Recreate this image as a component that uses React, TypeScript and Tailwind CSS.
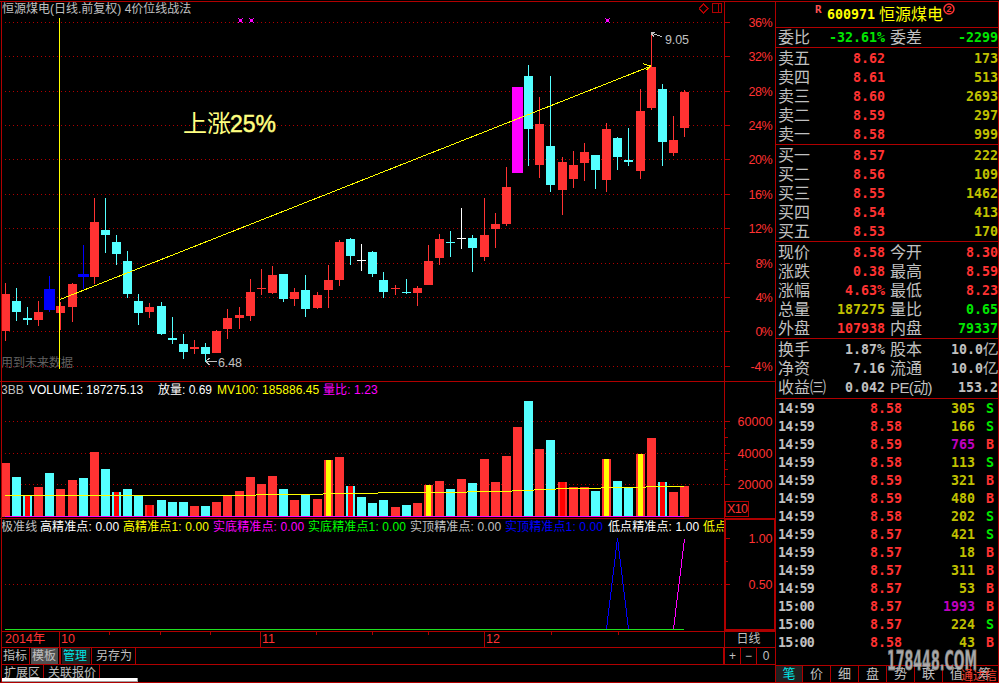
import React from "react";

type Kind = "r" | "c" | "b" | "w" | "m";
type Bar = [x: number, high: number, low: number, top: number, bottom: number, kind: Kind, vol: number, volKind: "r" | "c", inner?: "y" | "r"];

const BARS: Bar[] = [
  [5, 283, 341, 294, 331, "r", 463, "r"],
  [16, 288, 321, 301, 312, "c", 477, "c"],
  [27, 307, 325, 318, 320, "c", 496, "c", "r"],
  [38, 301, 326, 312, 320, "r", 487, "r"],
  [49, 276, 312, 289, 310, "b", 473, "c"],
  [60, 302, 330, 306, 313, "r", 489, "r"],
  [72, 283, 322, 284, 307, "r", 480, "r"],
  [83, 245, 289, 274, 277, "b", 478, "c"],
  [94, 198, 284, 222, 277, "r", 452, "r"],
  [105, 198, 253, 230, 235, "c", 469, "c"],
  [116, 235, 265, 242, 254, "c", 492, "c", "r"],
  [127, 251, 298, 261, 294, "c", 489, "c"],
  [138, 294, 325, 301, 313, "c", 496, "c"],
  [149, 303, 318, 307, 312, "r", 505, "r", "r"],
  [161, 302, 335, 306, 334, "c", 500, "c"],
  [172, 317, 344, 338, 340, "c", 502, "c"],
  [183, 334, 359, 344, 352, "c", 502, "c"],
  [194, 340, 354, 347, 349, "r", 506, "r"],
  [205, 343, 362, 347, 354, "c", 506, "c"],
  [216, 330, 353, 331, 353, "r", 502, "r"],
  [227, 309, 339, 318, 329, "r", 496, "r"],
  [239, 307, 329, 315, 318, "r", 491, "r"],
  [250, 279, 321, 292, 316, "r", 477, "r"],
  [261, 269, 295, 288, 289, "r", 484, "r"],
  [272, 266, 294, 275, 293, "r", 476, "r"],
  [283, 274, 302, 274, 299, "c", 489, "c"],
  [294, 288, 306, 292, 299, "r", 500, "r"],
  [305, 275, 317, 290, 309, "c", 495, "c"],
  [317, 292, 309, 295, 308, "r", 499, "r"],
  [328, 265, 308, 280, 290, "r", 460, "r", "y"],
  [339, 240, 286, 242, 280, "r", 457, "r"],
  [350, 238, 265, 239, 256, "c", 486, "c", "r"],
  [361, 244, 271, 260, 261, "w", 497, "c"],
  [372, 251, 277, 252, 274, "c", 503, "c"],
  [383, 272, 298, 280, 292, "c", 500, "c"],
  [395, 285, 295, 288, 289, "r", 507, "r"],
  [406, 279, 294, 292, 293, "c", 505, "c"],
  [417, 286, 306, 288, 293, "r", 503, "r"],
  [428, 245, 285, 261, 285, "r", 485, "r", "y"],
  [439, 234, 265, 239, 258, "r", 481, "r"],
  [450, 231, 257, 242, 243, "c", 489, "c"],
  [461, 208, 249, 238, 239, "w", 479, "r"],
  [472, 235, 272, 238, 248, "c", 483, "c"],
  [484, 198, 261, 235, 257, "r", 459, "r"],
  [495, 213, 248, 224, 229, "r", 482, "r"],
  [506, 167, 226, 187, 224, "r", 456, "r"],
  [517, 87, 173, 87, 173, "m", 427, "r"],
  [528, 65, 166, 76, 129, "c", 401, "c"],
  [539, 97, 178, 124, 165, "r", 449, "r"],
  [550, 76, 192, 146, 185, "c", 440, "c"],
  [562, 157, 215, 162, 190, "r", 482, "r", "r"],
  [573, 151, 188, 165, 179, "r", 487, "r"],
  [584, 143, 181, 152, 163, "r", 487, "r"],
  [595, 155, 189, 155, 170, "c", 491, "c"],
  [606, 123, 192, 129, 180, "r", 459, "r", "y"],
  [617, 137, 170, 138, 157, "c", 481, "c"],
  [628, 128, 166, 160, 162, "c", 487, "c"],
  [640, 89, 179, 111, 171, "r", 454, "r", "y"],
  [651, 33, 110, 67, 108, "r", 438, "r"],
  [662, 84, 166, 89, 142, "c", 482, "c", "r"],
  [673, 116, 156, 140, 153, "r", 492, "r"],
  [684, 90, 137, 92, 128, "r", 486, "r"],
];

const FILL: Record<Kind, string> = { r: "#ff3232", c: "#54ffff", b: "#0000ff", w: "#ffffff", m: "#ff00ff" };
const LINE = "#b00000";

function Grid({ ys }: { ys: number[] }) {
  return (
    <g stroke={LINE} strokeDasharray="1 3">
      {ys.map((y) => (
        <line key={y} x1={5} x2={723} y1={y + 0.5} y2={y + 0.5} />
      ))}
    </g>
  );
}

function Ticks({ ys, len }: { ys: number[]; len: number }) {
  return (
    <g fill={LINE}>
      {ys.map((y) => (
        <rect key={y} x={725} y={y} width={len} height={1} />
      ))}
    </g>
  );
}

function AxisText({ y, width, children }: { y: number; width: number; children: string }) {
  return (
    <text x={772.5 - width} y={y + 5} textLength={width} fontSize="12.5" fill="#ff3232">
      {children}
    </text>
  );
}

function Star({ x, s }: { x: number; s: number }) {
  return (
    <g fill="#ff00ff">
      <rect x={x - 1} y={19} width={3} height={3} />
      <path d={`M${x - s} 18h1v1h-1z M${x + s} 18h1v1h-1z M${x - s} 22h1v1h-1z M${x + s} 22h1v1h-1z`} />
    </g>
  );
}

const PRICE_AXIS: [number, string, number][] = [
  [22, "36%", 24], [56, "32%", 24], [91, "28%", 24], [125, "24%", 24], [159, "20%", 24], [194, "16%", 24],
  [228, "12%", 24], [263, "8%", 17], [297, "4%", 17], [331, "0%", 17], [366, "-4%", 22],
];

function PriceChart() {
  return (
    <svg className="block overflow-visible" width="775" height="363" viewBox="0 18 775 363" shapeRendering="crispEdges">
      <Grid ys={PRICE_AXIS.map((a) => a[0])} />
      <rect x={724} y={18} width={1} height={363} fill={LINE} />
      <Ticks ys={PRICE_AXIS.map((a) => a[0])} len={5} />
      {PRICE_AXIS.map(([y, label, w]) => (
        <AxisText key={label} y={y} width={w}>{label}</AxisText>
      ))}
      <Star x={240} s={2} />
      <Star x={251} s={2} />
      <Star x={607} s={2} />
      <text x={1} y={367} fontSize="12" fill="#606060">用到未来数据</text>
      {BARS.map(([x, hi, lo, top, bot, k]) => {
        const half = k === "b" || k === "m" ? 5 : x === 5 ? 3 : 4;
        const w = k === "b" || k === "m" ? 11 : x === 5 ? 8 : 9;
        return (
          <g key={x} fill={FILL[k]}>
            <rect x={x} y={hi} width={1} height={lo - hi} />
            <rect x={x - half} y={top} width={w} height={bot - top} />
          </g>
        );
      })}
      <rect x={59} y={18} width={1} height={351} fill="#ffff00" />
      <path d="M60 299.5L650 66.5M643 63.5L651 66.5M651 65.5L646.5 70" stroke="#ffff00" fill="none" />
      <path d="M651.5 35V32.5H655M652 33.5L662 36.5M652 34L654 37" stroke="#c0c0c0" fill="none" />
      <text x={665} y={44} fontSize="12.5" textLength="24" fill="#c0c0c0">9.05</text>
      <path d="M206 361.5H217M206 361L210 358M206 362L210 365" stroke="#c0c0c0" fill="none" />
      <text x={218} y={367} fontSize="12.5" textLength="24" fill="#c0c0c0">6.48</text>
      <text x={183} y={132} fontSize="24" fill="#ffff80">上涨</text>
      <text x={230} y={132} fontSize="24" textLength="46" lengthAdjust="spacingAndGlyphs" fill="#ffff80" stroke="#ffff80" strokeWidth="0.5">25%</text>
    </svg>
  );
}

function VolumeChart() {
  return (
    <svg className="block" width="775" height="119" viewBox="0 399 775 119" shapeRendering="crispEdges">
      <Grid ys={[421, 453, 484]} />
      <rect x={724} y={399} width={1} height={119} fill={LINE} />
      <Ticks ys={[421, 453, 484]} len={5} />
      <Ticks ys={[437, 469]} len={3} />
      <Ticks ys={[428, 445, 460, 476]} len={1} />
      <AxisText y={421} width={35}>60000</AxisText>
      <AxisText y={453} width={35}>40000</AxisText>
      <AxisText y={484} width={35}>20000</AxisText>
      <rect x={725.5} y={501.5} width={23} height={15} fill="none" stroke={LINE} />
      <text x={727} y={513} fontSize="12.5" textLength="21" fill="#ff3232">X10</text>
      {BARS.map(([x, , , , , , top, k, inner]) => (
        <g key={x}>
          <rect x={x === 5 ? 2 : x - 4} y={top} width={x === 5 ? 8 : 9} height={517 - top} fill={FILL[k]} />
          {inner && <rect x={x - 2} y={top} width={5} height={517 - top} fill={inner === "y" ? "#ffff00" : "#ff0000"} />}
        </g>
      ))}
      <path
        d="M5 495.5H256M256 494.5H323M323 493.5H378M378 492.5H467M467 491.5H512M512 490.5H534M534 489.5H556M556 488.5H601M601 487.5H646M646 486.5H684"
        stroke="#ffff00"
      />
      <rect x={5} y={516} width={679} height={1} fill="#ff00ff" />
    </svg>
  );
}

function IndicatorChart() {
  return (
    <svg className="block overflow-visible" width="775" height="95" viewBox="0 536 775 95" shapeRendering="crispEdges">
      <Grid ys={[584]} />
      <path d="M725 519V630H775" stroke={LINE} strokeWidth="2" fill="none" />
      <rect x={774} y={519} width={1} height={112} fill={LINE} />
      <Ticks ys={[538, 584]} len={5} />
      <Ticks ys={[561]} len={3} />
      <AxisText y={538} width={24}>1.00</AxisText>
      <AxisText y={584} width={24}>0.50</AxisText>
      <rect x={5} y={629} width={679} height={1} fill="#20e020" />
      <path d="M606.5 629L617.5 538L628.5 629" stroke="#0000ff" fill="none" />
      <path d="M673.5 629L684.5 539" stroke="#ff00ff" fill="none" />
    </svg>
  );
}

function Head({ children, side, short }: { children: React.ReactNode; side?: React.ReactNode; short?: boolean }) {
  return (
    <div className={`flex w-full ${short ? "h-[16px] leading-[15px]" : "h-[17px] leading-[17px]"}`}>
      <div className="flex w-[725px] overflow-hidden border-r border-[#b00000] pl-px text-[12px] whitespace-pre">{children}</div>
      {side}
    </div>
  );
}

function MainPanels() {
  return (
    <>
      <Head short>
        <span className="w-[698px] pl-px text-[#c0c0c0]">恒源煤电(日线.前复权) 4价位线战法</span>
        <svg className="h-[14px] w-[25px] shrink-0" viewBox="699 2 25 14" fill="none" stroke={LINE} shapeRendering="crispEdges">
          <path d="M703.5 4L708 8.5L703.5 13L699 8.5Z" />
          <path d="M712.5 3.5H721.5V12.5H712.5ZM718.5 3V13" />
        </svg>
      </Head>
      <PriceChart />
      <div className="h-px bg-[#b00000]" />
      <Head>
        <span className="w-[28px] text-[#c0c0c0]">3BB</span>
        <span className="w-[129px] text-white">VOLUME: 187275.13</span>
        <span className="w-[59px] text-white">放量: 0.69</span>
        <span className="w-[106px] tracking-[0.05px] text-[#ffff00]">MV100: 185886.45</span>
        <span className="tracking-[0.1px] text-[#ff00ff]">量比: 1.23</span>
      </Head>
      <VolumeChart />
      <div className="h-px bg-[#b00000]" />
      <Head side={<div className="h-full flex-1 border-t border-[#b00000]" />}>
        <div className="flex tracking-[0.12px]">
          <span className="w-[39px] shrink-0 text-[#c0c0c0]">极准线</span>
          <span className="w-[83px] shrink-0 text-white">高精准点: 0.00</span>
          <span className="w-[90px] shrink-0 text-[#ffff00]">高精准点1: 0.00</span>
          <span className="w-[95px] shrink-0 text-[#ff00ff]">实底精准点: 0.00</span>
          <span className="w-[102px] shrink-0 text-[#00ff00]">实底精准点1: 0.00</span>
          <span className="w-[95px] shrink-0 text-[#c0c0c0]">实顶精准点: 0.00</span>
          <span className="w-[103px] shrink-0 text-[#0000ff]">实顶精准点1: 0.00</span>
          <span className="w-[95px] shrink-0 text-white">低点精准点: 1.00</span>
          <span className="shrink-0 text-[#ffff00]">低点</span>
        </div>
      </Head>
      <IndicatorChart />
    </>
  );
}

function TimeAxis() {
  return (
    <div className="flex h-[17px] w-full border-y border-[#b00000] text-[12.5px] leading-[15px] text-[#ff3232]">
      <span className="w-[57px] pl-[3px]">2014年</span>
      <span className="w-[201px] border-l border-[#b00000] pl-px">10</span>
      <span className="w-[224px] border-l border-[#b00000] pl-px">11</span>
      <span className="w-[240px] border-l border-[#b00000] pl-px">12</span>
      <span className="flex-1 border-l border-[#b00000] pr-[3px] text-center text-[12px] text-[#c0c0c0]">日线</span>
    </div>
  );
}

function AxisMarks() {
  return (
    <svg className="absolute top-[631px] left-0" width="724" height="4" shapeRendering="crispEdges" fill={LINE}>
      {[109, 160, 210, 316, 372, 428, 551, 618].map((x) => (
        <rect key={x} x={x} y={0} width={1} height={4} />
      ))}
    </svg>
  );
}

function Toolbars() {
  return (
    <>
      <div className="flex h-[17px] w-full border-b border-[#b00000] text-[12px] leading-[17px] text-[#c0c0c0]">
        <span className="w-[28px] border-r border-[#b00000] pl-px">指标</span>
        <span className="w-[31px] border-r-2 border-[#b00000] px-px"><span className="block h-[16px] w-[27px] bg-[#505050] pl-px">模板</span></span>
        <span className="w-[31px] border-r border-[#b00000] pl-px"><span className="block h-[16px] w-[28px] bg-[#202020] pl-px text-[#00e6e6]">管理</span></span>
        <span className="w-[44px] border-r border-[#b00000] pl-[4px]">另存为</span>
        <span className="flex-1" />
        <span className="w-[18px] border-r border-l-2 border-[#b00000] text-center">+</span>
        <span className="w-[16px] border-r border-[#b00000] text-center">−</span>
        <span className="w-[18px] text-center">0</span>
      </div>
      <div className="flex h-[13px] w-full overflow-hidden text-[12px] leading-[17px] text-[#c0c0c0]">
        <span className="w-[42px] border-r border-[#b00000] pl-[2px]">扩展区</span>
        <span className="w-[56px] border-r border-[#b00000] pl-[4px]">关联报价</span>
      </div>
      <div className="h-[4px] w-[136px] border-r border-b border-[#a0a0a0] bg-white" />
    </>
  );
}

const NUM = "font-['DejaVu_Sans_Mono','Liberation_Mono',monospace] text-[13.3px] font-bold";

function Quote({ label, price, amount }: { label: string; price: string; amount: string }) {
  return (
    <div className="flex h-[19px] items-center">
      <span className="w-[50px] pl-[2px] text-[16px] text-[#c0c0c0]">{label}</span>
      <span className={`w-[59px] text-right text-[#ff3232] ${NUM}`}>{price}</span>
      <span className={`flex-1 text-right text-[#c0c000] ${NUM}`}>{amount}</span>
    </div>
  );
}

const TONE = { r: "text-[#ff3232]", g: "text-[#00e600]", y: "text-[#c0c000]", w: "text-[#c0c0c0]", m: "text-[#c000c0]" };
type Tone = keyof typeof TONE;

function Stat({ row, unit }: { row: [string, string, Tone, string, string, Tone]; unit?: string }) {
  return (
    <div className="flex h-[19px] items-center whitespace-nowrap">
      <span className="w-[50px] pl-[2px] text-[16px] text-[#c0c0c0]">{row[0]}</span>
      <span className={`w-[59px] text-right ${NUM} ${TONE[row[2]]}`}>{row[1]}</span>
      <span className="w-[48px] pl-[5px] text-[16px] text-[#c0c0c0]">
        {row[3] === "PE(动)" ? <span className="text-[15px] tracking-[-0.6px]">{row[3]}</span> : row[3]}
      </span>
      <span className={`flex-1 text-right ${NUM} ${TONE[row[5]]}`}>
        {row[4]}
        {unit && <span className="text-[15px] font-normal">{unit}</span>}
      </span>
    </div>
  );
}

const TRADES: [string, string, string, Tone, "S" | "B"][] = [
  ["14:59", "8.58", "305", "y", "S"],
  ["14:59", "8.58", "166", "y", "S"],
  ["14:59", "8.59", "765", "m", "B"],
  ["14:59", "8.58", "113", "y", "S"],
  ["14:59", "8.59", "321", "y", "B"],
  ["14:59", "8.59", "480", "y", "B"],
  ["14:59", "8.58", "202", "y", "S"],
  ["14:59", "8.57", "421", "y", "S"],
  ["14:59", "8.57", "18", "y", "B"],
  ["14:59", "8.57", "311", "y", "B"],
  ["14:59", "8.57", "53", "y", "B"],
  ["15:00", "8.57", "1993", "m", "B"],
  ["15:00", "8.57", "224", "y", "S"],
  ["15:00", "8.58", "43", "y", "B"],
];

function QuotePanel() {
  return (
    <div className="relative flex h-[682px] w-[224px] flex-col border-x border-t border-b border-[#b00000]">
      <div className="flex h-[26px] items-center border-b border-[#b00000] pl-[39px] text-[#ffff00]">
        <span className="-mt-[9px] mr-[4px] w-[8px] font-['DejaVu_Sans_Mono'] text-[11px] font-bold text-[#ff5050]">R</span>
        <span className={NUM}>600971</span>
        <span className="ml-[4px] text-[16px]">恒源煤电</span>
        <svg className="-mt-[12px] h-[12px] w-[12px]" viewBox="0 0 12 12">
          <circle cx="6" cy="6" r="5" fill="none" stroke="#ff3232" strokeWidth="1.5" />
          <text x="3.5" y="9" fontSize="9" fontWeight="bold" fill="#ff3232">2</text>
        </svg>
      </div>
      <div className="h-[20px] border-b border-[#b00000]">
        <Stat row={["委比", "-32.61%", "g", "委差", "-2299", "g"]} />
      </div>
      <div className="h-[97px] border-b border-[#b00000] pt-px">
        <Quote label="卖五" price="8.62" amount="173" />
        <Quote label="卖四" price="8.61" amount="513" />
        <Quote label="卖三" price="8.60" amount="2693" />
        <Quote label="卖二" price="8.59" amount="297" />
        <Quote label="卖一" price="8.58" amount="999" />
      </div>
      <div className="h-[97px] border-b border-[#b00000] pt-px">
        <Quote label="买一" price="8.57" amount="222" />
        <Quote label="买二" price="8.56" amount="109" />
        <Quote label="买三" price="8.55" amount="1462" />
        <Quote label="买四" price="8.54" amount="413" />
        <Quote label="买五" price="8.53" amount="170" />
      </div>
      <div className="h-[97px] border-b border-[#b00000] pt-px">
        <Stat row={["现价", "8.58", "r", "今开", "8.30", "r"]} />
        <Stat row={["涨跌", "0.38", "r", "最高", "8.59", "r"]} />
        <Stat row={["涨幅", "4.63%", "r", "最低", "8.23", "r"]} />
        <Stat row={["总量", "187275", "y", "量比", "0.65", "g"]} />
        <Stat row={["外盘", "107938", "r", "内盘", "79337", "g"]} />
      </div>
      <div className="h-[60px] border-b border-[#b00000] pt-px">
        <Stat row={["换手", "1.87%", "w", "股本", "10.0", "w"]} unit="亿" />
        <Stat row={["净资", "7.16", "w", "流通", "10.0", "w"]} unit="亿" />
        <Stat row={["收益㈢", "0.042", "w", "PE(动)", "153.2", "w"]} />
      </div>
      <div className="flex-1 pt-px">
        {TRADES.map(([time, price, amount, tone, side], i) => (
          <div key={i} className={`flex h-[18px] items-center ${NUM}`}>
            <span className="w-[50px] pl-[2px] tracking-[-0.8px] text-[#c0c0c0]">{time}</span>
            <span className="w-[76px] text-right text-[#ff3232]">{price}</span>
            <span className={`w-[73px] text-right ${TONE[tone]}`}>{amount}</span>
            <span className={`w-[19px] text-right ${side === "S" ? TONE.g : TONE.r}`}>{side}</span>
          </div>
        ))}
      </div>
      <div className="flex h-[17px] overflow-hidden border-t border-[#b00000] text-[13px] leading-[16px] text-[#c0c0c0]">
        <span className="w-[26px] shrink-0 bg-[#202020] text-center text-[#00e6e6]">笔</span>
        {["价", "细", "盘", "势", "联", "值", "筹"].map((t) => (
          <span key={t} className="w-[28px] shrink-0 border-l border-[#b00000] text-center">
            {t}
          </span>
        ))}
      </div>
      <svg className="absolute top-[644px] left-[108px]" width="100" height="30" viewBox="0 0 100 30">
        <text
          x="3" y="24" fontSize="26" fontWeight="bold" textLength="90" lengthAdjust="spacingAndGlyphs"
          className="font-['DejaVu_Sans']" fill="#b8b8b8" stroke="#8a8a8a" strokeWidth="0.8" opacity="0.92"
        >
          178448.COM
        </text>
      </svg>
      <span className="absolute top-[666px] left-[185px] text-[12px] leading-[16px] text-[#f04030]">通达信</span>
    </div>
  );
}

export default function App() {
  return (
    <div className="relative flex h-[683px] w-[999px] overflow-hidden bg-black pt-px font-['Liberation_Sans','Noto_Sans_CJK_SC',sans-serif]">
      <div className="w-[775px] border-t border-b border-[#b00000]">
        <div className="relative h-full">
          <div className="h-[629px]">
            <MainPanels />
          </div>
          <div className="flex flex-col pl-[2px]">
            <TimeAxis />
            <Toolbars />
          </div>
          <div className="absolute top-0 left-px h-full w-px bg-[#b00000]" />
        </div>
      </div>
      <AxisMarks />
      <QuotePanel />
    </div>
  );
}
